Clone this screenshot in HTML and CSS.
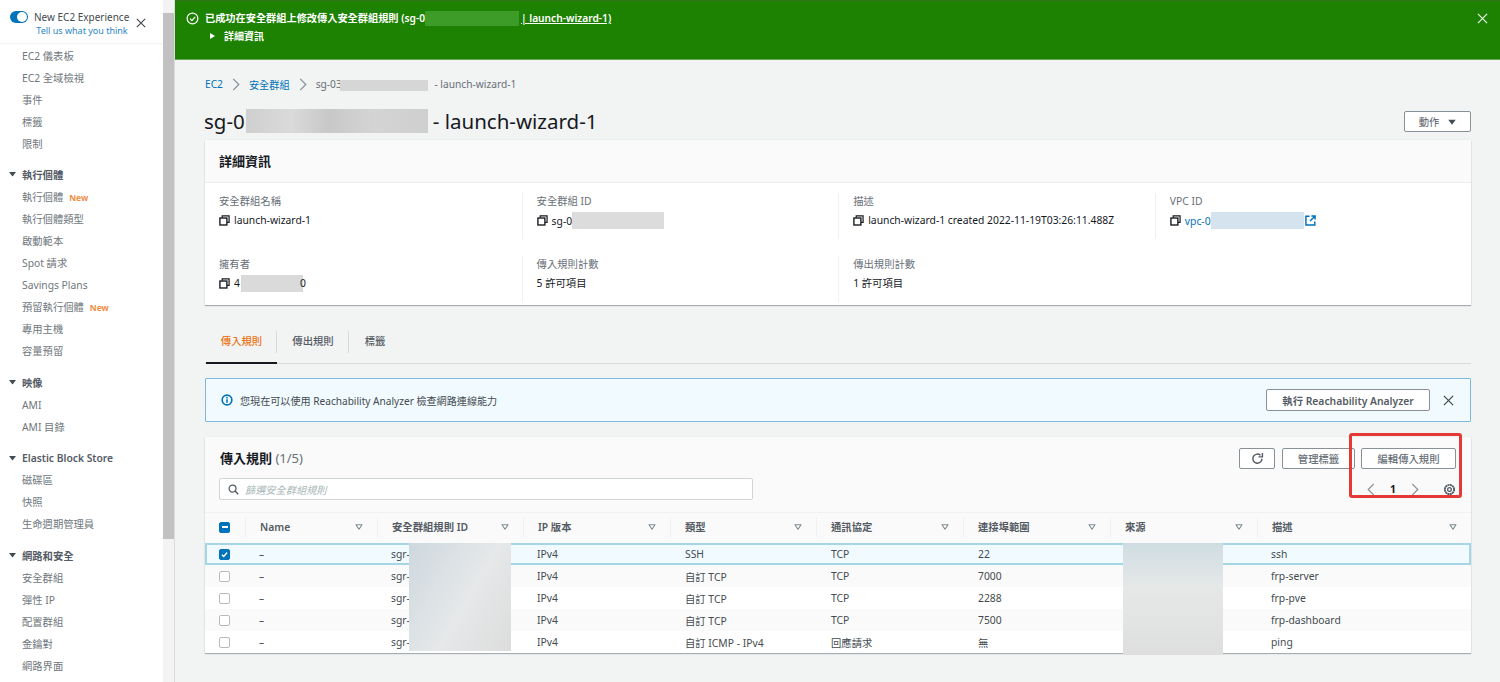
FILE: index.html
```html
<!DOCTYPE html>
<html lang="zh-Hant">
<head>
<meta charset="utf-8">
<title>EC2 安全群組</title>
<link rel="stylesheet" href="styles.css">
</head>
<body>
<svg class="defs" width="0" height="0">
  <symbol id="copy" viewBox="0 0 12 12"><path d="M3.5 3V1h7.5v7H8.8" fill="none" stroke="#16191f" stroke-width="1.3"/><rect x="1" y="3.3" width="7.6" height="7.6" fill="none" stroke="#16191f" stroke-width="1.5"/></symbol>
  <symbol id="sort" viewBox="0 0 10 8"><path d="M1 1h8L5 7z" fill="#fff" stroke="#7f8a8f" stroke-width="1.5" stroke-linejoin="round"/></symbol>
  <symbol id="down" viewBox="0 0 10 8"><path d="M0 1h10L5 7.5z" fill="#444b50"/></symbol>
  <symbol id="chev" viewBox="0 0 8 14"><path d="M1 1l6 6-6 6" fill="none" stroke="#879196" stroke-width="1.3"/></symbol>
  <symbol id="close" viewBox="0 0 12 12"><path d="M1 1l10 10M11 1L1 11" fill="none" stroke="currentColor" stroke-width="1.4"/></symbol>
</svg>

<aside class="sidebar">
  <div class="exp">
    <span class="toggle"></span>
    <div class="exp-text">
      <div class="exp-title">New EC2 Experience</div>
      <div class="exp-link">Tell us what you think</div>
    </div>
    <svg class="exp-close"><use href="#close"/></svg>
  </div>
  <nav class="nav">
    <a class="nav-item">EC2 儀表板</a>
    <a class="nav-item">EC2 全域檢視</a>
    <a class="nav-item">事件</a>
    <a class="nav-item">標籤</a>
    <a class="nav-item">限制</a>
    <div class="nav-head"><svg class="nav-caret"><use href="#down"/></svg>執行個體</div>
    <a class="nav-item">執行個體<span class="new">New</span></a>
    <a class="nav-item">執行個體類型</a>
    <a class="nav-item">啟動範本</a>
    <a class="nav-item">Spot 請求</a>
    <a class="nav-item">Savings Plans</a>
    <a class="nav-item">預留執行個體<span class="new">New</span></a>
    <a class="nav-item">專用主機</a>
    <a class="nav-item">容量預留</a>
    <div class="nav-head"><svg class="nav-caret"><use href="#down"/></svg>映像</div>
    <a class="nav-item">AMI</a>
    <a class="nav-item">AMI 目錄</a>
    <div class="nav-head nav-head-tight"><svg class="nav-caret"><use href="#down"/></svg>Elastic Block Store</div>
    <a class="nav-item">磁碟區</a>
    <a class="nav-item">快照</a>
    <a class="nav-item">生命週期管理員</a>
    <div class="nav-head"><svg class="nav-caret"><use href="#down"/></svg>網路和安全</div>
    <a class="nav-item">安全群組</a>
    <a class="nav-item">彈性 IP</a>
    <a class="nav-item">配置群組</a>
    <a class="nav-item">金鑰對</a>
    <a class="nav-item">網路界面</a>
  </nav>
</aside>
<div class="scrollbar"><div class="scroll-thumb"></div></div>

<main class="main">
  <div class="banner">
    <svg class="banner-check" viewBox="0 0 14 14"><circle cx="7" cy="7" r="5.8" fill="none" stroke="#fff" stroke-width="1.3"/><path d="M4.3 7.2l2 2 3.6-4" fill="none" stroke="#fff" stroke-width="1.3"/></svg>
    <div class="banner-body">
      <div class="banner-title">已成功在安全群組上修改傳入安全群組規則 (sg-0<span class="mask-green"></span><span class="banner-link">| launch-wizard-1)</span></div>
      <div class="banner-detail"><span class="tri"></span>詳細資訊</div>
    </div>
    <svg class="banner-close"><use href="#close"/></svg>
  </div>

  <div class="content">
    <div class="crumbs">
      <a class="link">EC2</a><svg class="crumb-sep"><use href="#chev"/></svg>
      <a class="link">安全群組</a><svg class="crumb-sep"><use href="#chev"/></svg>
      <span>sg-03<span class="mask mask-crumb"></span> - launch-wizard-1</span>
    </div>

    <div class="title-row">
      <h1 class="title">sg-0<span class="mask mask-title"></span> - launch-wizard-1</h1>
      <button class="btn btn-action">動作<svg class="btn-caret"><use href="#down"/></svg></button>
    </div>

    <section class="card details">
      <h2 class="card-head">詳細資訊</h2>
      <div class="detail-grid">
        <div class="kv"><div class="k">安全群組名稱</div><div class="v"><svg class="copy"><use href="#copy"/></svg>launch-wizard-1</div></div>
        <div class="kv"><div class="k">安全群組 ID</div><div class="v"><svg class="copy"><use href="#copy"/></svg>sg-0<span class="mask mask-sg"></span></div></div>
        <div class="kv"><div class="k">描述</div><div class="v"><svg class="copy"><use href="#copy"/></svg>launch-wizard-1 created 2022-11-19T03:26:11.488Z</div></div>
        <div class="kv"><div class="k">VPC ID</div><div class="v"><svg class="copy"><use href="#copy"/></svg><a class="link">vpc-0</a><span class="mask mask-vpc"></span><svg class="ext" viewBox="0 0 12 12"><path d="M5 1.3H1v9.7h9.7V7M7 1h4v4M11 1L5.5 6.5" fill="none" stroke="#0073bb" stroke-width="1.6"/></svg></div></div>
        <div class="kv"><div class="k">擁有者</div><div class="v"><svg class="copy"><use href="#copy"/></svg>4<span class="mask mask-owner"></span>0</div></div>
        <div class="kv"><div class="k">傳入規則計數</div><div class="v">5 許可項目</div></div>
        <div class="kv"><div class="k">傳出規則計數</div><div class="v">1 許可項目</div></div>
      </div>
    </section>

    <div class="tabs">
      <a class="tab tab-active">傳入規則</a>
      <a class="tab">傳出規則</a>
      <a class="tab tab-last">標籤</a>
    </div>

    <div class="alert">
      <svg class="alert-icon" viewBox="0 0 14 14"><circle cx="7" cy="7" r="5.7" fill="none" stroke="#0073bb" stroke-width="1.8"/><path d="M7 6.2v4M7 3.6v1.6" stroke="#0073bb" stroke-width="1.8"/></svg>
      <span class="alert-text">您現在可以使用 Reachability Analyzer 檢查網路連線能力</span>
      <button class="btn btn-reach">執行 Reachability Analyzer</button>
      <svg class="alert-close"><use href="#close"/></svg>
    </div>

    <section class="card rules">
      <div class="rules-top">
        <div class="rules-left">
          <h2 class="rules-title">傳入規則 <span class="count">(1/5)</span></h2>
          <div class="search">
            <svg class="search-icon" viewBox="0 0 14 14"><circle cx="5.8" cy="5.8" r="4.4" fill="none" stroke="#545b64" stroke-width="1.6"/><path d="M9 9l4 4" stroke="#545b64" stroke-width="1.8"/></svg>
            <span class="search-ph">篩選安全群組規則</span>
          </div>
        </div>
        <div class="rules-right">
          <div class="rules-btns">
            <button class="btn btn-refresh"><svg class="refresh" viewBox="0 0 14 14"><path d="M11.8 7.2a4.9 4.9 0 1 1-1.6-3.7" fill="none" stroke="#545b64" stroke-width="1.6"/><path d="M12.3 1v4.2H8.1" fill="none" stroke="#545b64" stroke-width="1.5"/></svg></button>
            <button class="btn btn-tags">管理標籤</button>
            <button class="btn btn-edit">編輯傳入規則</button>
          </div>
          <div class="pager">
            <svg class="pg-prev"><use href="#chev"/></svg>
            <span class="pg-num">1</span>
            <svg class="pg-next"><use href="#chev"/></svg>
            <svg class="gear" viewBox="0 0 14 14"><circle cx="7" cy="7" r="5" fill="none" stroke="#545b64" stroke-width="2" stroke-dasharray="2.2 .4"/><circle cx="7" cy="7" r="2" fill="none" stroke="#545b64" stroke-width="1.4"/></svg>
          </div>
        </div>
      </div>

      <div class="table">
        <div class="row row-head">
          <div class="cell cell-check"><span class="cb cb-mixed"></span></div>
          <div class="cell th">Name<svg class="sort"><use href="#sort"/></svg></div>
          <div class="cell th">安全群組規則 ID<svg class="sort"><use href="#sort"/></svg></div>
          <div class="cell th">IP 版本<svg class="sort"><use href="#sort"/></svg></div>
          <div class="cell th">類型<svg class="sort"><use href="#sort"/></svg></div>
          <div class="cell th">通訊協定<svg class="sort"><use href="#sort"/></svg></div>
          <div class="cell th">連接埠範圍<svg class="sort"><use href="#sort"/></svg></div>
          <div class="cell th">來源<svg class="sort"><use href="#sort"/></svg></div>
          <div class="cell th">描述<svg class="sort"><use href="#sort"/></svg></div>
        </div>
        <div class="row row-selected">
          <div class="cell cell-check"><span class="cb cb-checked"><svg viewBox="0 0 12 12"><path d="M2.5 6.2l2.5 2.5 4.5-5.4" fill="none" stroke="#fff" stroke-width="1.8"/></svg></span></div>
          <div class="cell">–</div><div class="cell">sgr-</div><div class="cell">IPv4</div><div class="cell">SSH</div><div class="cell">TCP</div><div class="cell">22</div><div class="cell"></div><div class="cell">ssh</div>
        </div>
        <div class="row row-alt">
          <div class="cell cell-check"><span class="cb"></span></div>
          <div class="cell">–</div><div class="cell">sgr-</div><div class="cell">IPv4</div><div class="cell">自訂 TCP</div><div class="cell">TCP</div><div class="cell">7000</div><div class="cell"></div><div class="cell">frp-server</div>
        </div>
        <div class="row">
          <div class="cell cell-check"><span class="cb"></span></div>
          <div class="cell">–</div><div class="cell">sgr-</div><div class="cell">IPv4</div><div class="cell">自訂 TCP</div><div class="cell">TCP</div><div class="cell">2288</div><div class="cell"></div><div class="cell">frp-pve</div>
        </div>
        <div class="row row-alt">
          <div class="cell cell-check"><span class="cb"></span></div>
          <div class="cell">–</div><div class="cell">sgr-</div><div class="cell">IPv4</div><div class="cell">自訂 TCP</div><div class="cell">TCP</div><div class="cell">7500</div><div class="cell"></div><div class="cell">frp-dashboard</div>
        </div>
        <div class="row">
          <div class="cell cell-check"><span class="cb"></span></div>
          <div class="cell">–</div><div class="cell">sgr-</div><div class="cell">IPv4</div><div class="cell">自訂 ICMP - IPv4</div><div class="cell">回應請求</div><div class="cell">無</div><div class="cell"></div><div class="cell">ping</div>
        </div>
        <div class="blur blur-sgr"></div>
        <div class="blur blur-src"></div>
      </div>
      <div class="highlight"></div>
    </section>
  </div>
</main>
</body>
</html>
```
FILE: styles.css
```css
* { box-sizing: border-box; }
html, body { height: 100%; }
body {
  margin: 0;
  display: flex;
  height: 682px;
  overflow: hidden;
  font-family: "Noto Sans", "Noto Sans CJK TC", sans-serif;
  font-size: 10.33px;
  color: #16191f;
  background: #f2f3f3;
}
.defs { position: absolute; }
button { font: inherit; }

/* Sidebar */
.sidebar { width: 163px; flex: none; background: #fff; color: #545b64; }
.exp {
  height: 43px;
  display: flex;
  align-items: flex-start;
  padding: 10px 0 0 10px;
  box-shadow: 0 1px 1px #f3f3f3;
}
.toggle {
  width: 18px; height: 12px; margin-top: 1px;
  border-radius: 6px; background: #0073bb; position: relative; flex: none;
}
.toggle::after {
  content: ""; position: absolute; right: 1px; top: 1px;
  width: 10px; height: 10px; border-radius: 50%; background: #fff;
}
.exp-text { margin-left: 6px; width: 96px; text-align: center; }
.exp-title { font-size: 10px; line-height: 15px; color: #444b50; white-space: nowrap; text-align: left; }
.exp-link { font-size: 9px; line-height: 12px; color: #0073bb; white-space: nowrap; opacity: .85; }
.exp-close { width: 10px; height: 10px; margin: 8px 0 0 6px; color: #444b50; }
.nav { padding-top: 2px; }
.nav-item {
  display: block; height: 22px; line-height: 22px;
  padding-left: 22px; font-size: 10.3px; color: #6f777d; white-space: nowrap;
}
.nav-head {
  display: flex; align-items: center;
  height: 22px; margin-top: 9px; margin-bottom: 1px; padding-left: 9px;
  font-size: 10.3px; font-weight: 600; color: #545b64; white-space: nowrap;
}
.nav-head:first-of-type { margin-top: 8px; }
.nav-head-tight { margin-bottom: 0; }
.nav-caret { width: 7px; height: 6px; margin-right: 6px; flex: none; }
.new { margin-left: 6px; font-size: 8.5px; font-weight: 700; color: #ec7211; opacity: .8; }

/* Scrollbar */
.scrollbar {
  width: 12px; flex: none; background: #f3f3f3;
  border-right: 1px solid #dcdcdc; padding-top: 13px;
}
.scroll-thumb { width: 11px; height: 526px; background: #c1c1c1; }

/* Main */
.main { flex: 1; min-width: 0; }
.banner {
  height: 60px; background: #1d8102; color: #fff;
  display: flex; padding: 10px 12px 0 11px;
  border-bottom: 1px solid #67a656;
  border-top: 1px solid #37721f;
}
.banner-check { width: 13px; height: 13px; margin-top: 1px; flex: none; }
.banner-body { flex: 1; margin-left: 6px; }
.banner-title { height: 14px; line-height: 14px; font-size: 10.2px; font-weight: 600; display: flex; align-items: center; white-space: nowrap; }
.mask-green { width: 94px; height: 15px; background: #43a02e; opacity: .85; flex: none; }
.banner-link { text-decoration: underline; margin-left: 2px; }
.banner-detail { margin-top: 4px; font-size: 10px; font-weight: 600; line-height: 14px; display: flex; align-items: center; padding-left: 5px; }
.tri {
  width: 0; height: 0; margin-right: 9px;
  border-left: 5px solid #fff; border-top: 3.5px solid transparent; border-bottom: 3.5px solid transparent;
}
.banner-close { width: 11px; height: 11px; margin-top: 2px; color: #e6f0e3; }

.content { padding: 0 29px 0 30px; position: relative; }
.link { color: #0073bb; }
.crumbs {
  height: 48px;
  display: flex; align-items: center; font-size: 10.2px; color: #687078;
}
.crumb-sep { width: 8px; height: 13px; margin: 0 9px; }
.mask { display: inline-block; vertical-align: middle; }
.mask-crumb { width: 88px; height: 11px; margin: 0 4px 0 -2px; background: #d6d6d6; }
.title-row { height: 26px; display: flex; align-items: center; justify-content: space-between; }
.title {
  margin: 0 0 0 -1px; font-size: 20.5px; font-weight: 400; line-height: 26px;
  color: #16191f; white-space: nowrap; display: flex; align-items: center;
}
.mask-title {
  width: 182px; height: 24px; margin: 0 5px 0 1px;
  background: linear-gradient(90deg, #cfcfcf, #dadada 25%, #c8c8c8 45%, #d4d4d4 70%, #cfcfcf);
}
.btn {
  background: #fff; border: 1px solid #879196; border-radius: 2px;
  color: #545b64; font-weight: 600; font-size: 10.33px;
  display: inline-flex; align-items: center; justify-content: center; padding: 0;
}
.btn-action { width: 67px; height: 21px; margin-top: 1px; font-weight: 400; }
.btn-caret { width: 8px; height: 6px; margin-left: 9px; }

.card { background: #fff; box-shadow: 0 1px 1px rgba(0,21,41,.3), 0 0 1px rgba(0,28,36,.1); }
.details { margin-top: 6px; height: 165px; }
.card-head {
  margin: 0; height: 43px; line-height: 42px; padding-left: 14px;
  font-size: 13px; font-weight: 600; color: #16191f;
  background: #fafafa; border-bottom: 1px solid #eaeded;
}
.detail-grid { display: grid; grid-template-columns: repeat(4, 316.6px); grid-auto-rows: 62.5px; padding-top: 10px; }
.kv { padding-left: 14px; border-left: 1px solid #f0f1f1; height: 46px; }
.kv:nth-child(4n+1) { border-left: 0; }
.k { font-size: 10.33px; line-height: 16px; color: #687078; white-space: nowrap; }
.v { font-size: 10.33px; line-height: 16px; margin-top: 3px; color: #16191f; display: flex; align-items: center; white-space: nowrap; }
.copy { width: 11px; height: 11px; margin-right: 4px; flex: none; }
.mask-sg { width: 92px; height: 17px; background: #dcdcdc; }
.mask-vpc { width: 93px; height: 17px; background: #d5e3ee; }
.ext { width: 11px; height: 11px; margin-left: 1px; }
.mask-owner { width: 62px; height: 17px; background: #dadada; margin-left: 1px; margin-right: -3px; }

.tabs { margin-top: 13px; height: 46px; display: flex; border-bottom: 1px solid #d5dbdb; padding-left: 1px; }
.tab {
  width: 72px; height: 46px; line-height: 46px; text-align: center;
  font-size: 10.33px; color: #545b64; font-weight: 500; position: relative;
}
.tab::after {
  content: ""; position: absolute; right: 0; top: 13px; height: 22px; width: 1px; background: #d5dbdb;
}
.tab-last { width: 52px; }
.tab-last::after { display: none; }
.tab-active { width: 71px; color: #ec7211; border-bottom: 2px solid #16191f; }

.alert {
  margin-top: 14px; height: 44px; width: 1266px;
  display: flex; align-items: center; padding: 0 16px 0 15px;
  background: #f1faff; border: 1px solid #7fb9da; border-radius: 1px;
}
.alert-icon { width: 12px; height: 12px; flex: none; }
.alert-text { flex: 1; margin-left: 7px; font-size: 10.1px; color: #444b50; white-space: nowrap; }
.btn-reach { width: 164px; height: 22px; color: #545b64; }
.alert-close { width: 11px; height: 11px; margin-left: 13px; color: #444b50; }

.rules { margin-top: 15px; width: 1266px; height: 216px; position: relative; }
.rules-top { height: 76px; display: flex; justify-content: space-between; padding: 0 15px 0 14px; background: #fafafa; border-bottom: 1px solid #f0f1f1; }
.rules-title { margin: 0; padding-top: 11px; padding-left: 1px; font-size: 13px; font-weight: 600; line-height: 20px; color: #16191f; }
.count { font-weight: 400; color: #687078; }
.search {
  margin-top: 10px; width: 534px; height: 22px;
  background: #fff; border: 1px solid #d0d5d7; border-radius: 2px;
  display: flex; align-items: center; padding-left: 8px;
}
.search-icon { width: 11px; height: 11px; }
.search-ph { margin-left: 6px; font-style: italic; font-size: 10.2px; color: #aab7b8; }
.rules-right { display: flex; flex-direction: column; align-items: flex-end; }
.rules-btns { display: flex; padding-top: 11px; }
.btn-refresh { width: 36px; height: 21px; }
.refresh { width: 13px; height: 13px; }
.btn-tags { width: 73px; height: 21px; margin-left: 7px; font-weight: 500; color: #687078; }
.btn-edit { width: 95px; height: 21px; margin-left: 6px; font-weight: 500; color: #687078; }
.pager { display: flex; align-items: center; height: 20px; margin-top: 10px; }
.pg-prev { width: 8px; height: 13px; transform: scaleX(-1); }
.pg-num { width: 36px; text-align: center; font-weight: 700; font-size: 10.33px; }
.pg-next { width: 8px; height: 13px; }
.gear { width: 13px; height: 13px; margin-left: 24px; }

.table { position: relative; }
.row {
  display: grid;
  grid-template-columns: 40px 132px 146px 147px 146px 147px 147px 147px 214px;
  height: 22px; align-items: center; background: #fff;
}
.row-alt { background: #fafafa; }
.row-head { height: 30px; padding-bottom: 2px; background: #fafafa; }
.row-selected { background: #f1faff; outline: 2px solid #a5d6e6; outline-offset: -2px; }
.cell { padding-left: 14px; font-size: 10.33px; color: #444b50; white-space: nowrap; min-width: 0; }
.row:not(.row-head) .cell:nth-child(n+5):nth-child(-n+7) { padding-left: 15px; }
.th {
  padding-left: 14px; height: 20px; line-height: 20px;
  font-weight: 600; color: #545b64; border-left: 1px solid #f0f1f1;
  display: flex; justify-content: space-between; align-items: center; padding-right: 14px;
}
.cell-check { padding-left: 14px; display: flex; }
.cb { width: 11px; height: 11px; border: 1px solid #b5bcc0; border-radius: 2px; background: #fff; display: block; }
.cb-mixed, .cb-checked { background: #0073bb; border-color: #0073bb; position: relative; }
.cb-mixed::after { content: ""; position: absolute; left: 1.5px; top: 3.5px; width: 6px; height: 2px; background: #fff; }
.cb-checked svg { display: block; width: 9px; height: 9px; }
.sort { width: 8px; height: 6px; flex: none; }
.blur { position: absolute; top: 30px; height: 108px; }
.blur-sgr { left: 204px; width: 102px; background: linear-gradient(120deg, #cdd8de, #e6e8e9 55%, #dcdcdc); }
.blur-src { left: 918px; width: 100px; height: 112px; background: linear-gradient(180deg, #cfdde2, #e6e8e8 40%, #dedede); }
.highlight {
  position: absolute; left: 1144px; top: -4px; width: 113px; height: 65px;
  border: 3px solid #e53935; border-radius: 3px;
}
```
